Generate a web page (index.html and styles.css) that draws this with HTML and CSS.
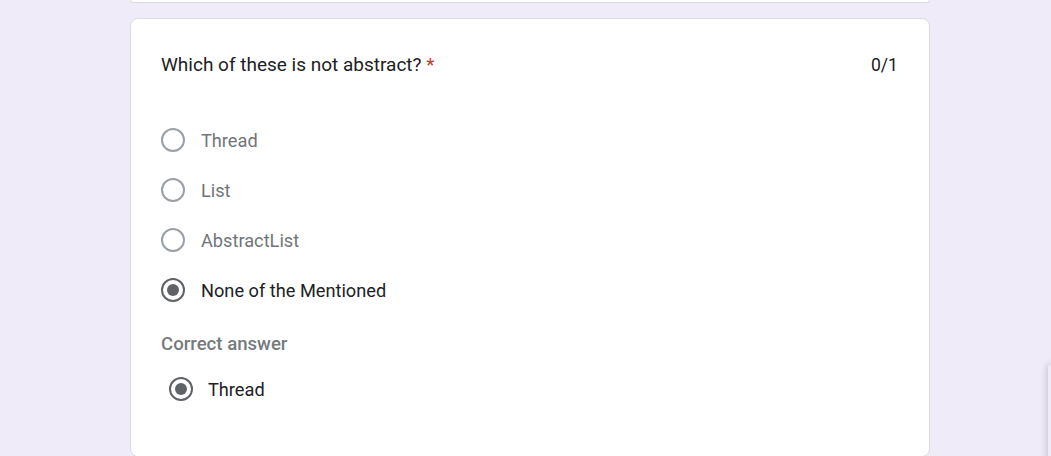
FILE: index.html
```html
<!DOCTYPE html>
<html>
<head>
<meta charset="utf-8">
<link rel="stylesheet" href="styles.css">
</head>
<body>
<div class="page">
  <div class="prev-card"></div>
  <div class="card">
    <div class="q-head">
      <div class="q-title">Which of these is not abstract? <span class="req">*</span></div>
      <div class="score">0/1</div>
    </div>
    <div class="options">
      <div class="opt"><span class="radio"></span><span class="label muted">Thread</span></div>
      <div class="opt"><span class="radio"></span><span class="label muted">List</span></div>
      <div class="opt"><span class="radio"></span><span class="label muted">AbstractList</span></div>
      <div class="opt"><span class="radio checked"></span><span class="label">None of the Mentioned</span></div>
    </div>
    <div class="correct-title">Correct answer</div>
    <div class="opt correct"><span class="radio checked"></span><span class="label">Thread</span></div>
  </div>
  <div class="side-fab"></div>
</div>
</body>
</html>
```

FILE: styles.css
```css
html, body {
  margin: 0;
  padding: 0;
  background: #f0ebf8;
  font-family: Roboto, "Liberation Sans", sans-serif;
  overflow: hidden;
}
.page {
  position: relative;
  height: 456px;
  padding-left: 130px;
  box-sizing: border-box;
  overflow: hidden;
}
.prev-card {
  width: 800px;
  box-sizing: border-box;
  height: 3px;
  background: #fff;
  border: 1px solid #dadce0;
  border-top: none;
  border-radius: 0 0 8px 8px;
}
.card {
  margin-top: 15px;
  width: 800px;
  box-sizing: border-box;
  height: 439px;
  background: #fff;
  border: 1px solid #dadce0;
  border-radius: 8px;
  padding: 33px 31px 0 30px;
}
.q-head {
  display: flex;
  justify-content: space-between;
  align-items: flex-start;
  line-height: 26px;
  color: #202124;
}
.q-title { font-size: 19px; }
.score { font-size: 17.6px; }
.req { color: #d93025; }
.options {
  margin-top: 37px;
  display: flex;
  flex-direction: column;
}
.opt {
  display: flex;
  align-items: center;
  height: 50px;
}
.radio {
  width: 24px;
  height: 24px;
  box-sizing: border-box;
  border: 2px solid #9aa0a6;
  border-radius: 50%;
  position: relative;
  flex: none;
}
.radio.checked { border-color: #5f6368; }
.radio.checked::after {
  content: "";
  position: absolute;
  left: 4px;
  top: 4px;
  width: 12px;
  height: 12px;
  border-radius: 50%;
  background: #5f6368;
}
.label {
  margin-left: 16px;
  font-size: 18.2px;
  color: #202124;
}
.label.muted { color: #70757a; }
.correct-title {
  margin-top: 17px;
  font-size: 18.6px;
  font-weight: 500;
  color: #757a80;
  line-height: 24px;
}
.correct {
  margin-top: 8px;
  padding-left: 8px;
}
.correct .label { margin-left: 15px; }
.side-fab {
  position: absolute;
  left: 1048px;
  top: 364px;
  width: 60px;
  height: 120px;
  background: #f0ebf8;
  box-shadow: -2px 0 6px rgba(0,0,0,0.15);
  border-radius: 4px;
}
```
